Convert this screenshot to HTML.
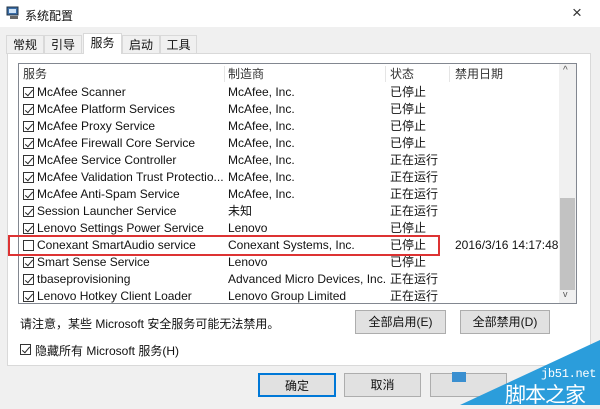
<!DOCTYPE html>
<html><head><meta charset="utf-8"><style>
*{margin:0;padding:0;box-sizing:border-box}
body{width:600px;height:405px;overflow:hidden;background:#f0f0f0;font-family:"Liberation Sans","Noto Sans CJK SC",sans-serif;font-size:12px;color:#111;position:relative}
.abs{position:absolute}
.title{left:0;top:0;width:600px;height:27px;background:#fff}
.tab{top:35px;height:19px;line-height:18px;text-align:center;font-size:12px;border:1px solid #d9d9d9;border-bottom:none;background:#f0f0f0}
.panel{left:7px;top:53px;width:584px;height:313px;background:#fff;border:1px solid #d9d9d9}
.list{left:18px;top:63px;width:559px;height:241px;border:1px solid #828790;background:#fff}
.row{position:absolute;left:0;height:17px;line-height:17px;width:540px;white-space:nowrap}
.row span{position:absolute}
.cb{position:absolute;left:4px;top:3px;width:11px;height:11px;border:1px solid #333;background:#fff}
.cb.on::after{content:"";position:absolute;left:3px;top:0px;width:3px;height:7px;border:solid #222;border-width:0 1.3px 1.3px 0;transform:rotate(40deg)}
.btn{height:24px;line-height:22px;text-align:center;background:#e1e1e1;border:1px solid #adadad;font-size:12px}
</style></head><body>
<div class="abs title"></div>
<svg class="abs" style="left:6px;top:6px" width="14" height="14" viewBox="0 0 14 14"><rect x="1" y="1" width="11" height="8" fill="#3b6ea8" stroke="#234"/><rect x="3" y="3" width="7" height="4" fill="#cfe3f7"/><rect x="4" y="10" width="8" height="3" fill="#666"/></svg>
<div class="abs" style="left:25px;top:7px;font-size:12px">系统配置</div>
<div class="abs" style="left:572px;top:3px;font-size:17px;color:#333">×</div>
<div class="abs tab" style="left:6px;width:38px">常规</div>
<div class="abs tab" style="left:44px;width:38px">引导</div>
<div class="abs tab" style="left:160px;width:37px">工具</div>
<div class="abs tab" style="left:122px;width:38px">启动</div>
<div class="abs panel"></div>
<div class="abs tab" style="left:83px;top:33px;width:39px;height:21px;background:#fff;z-index:2">服务</div>
<div class="abs list">
 <div class="row" style="top:2px;color:#333"><span style="left:4px">服务</span><span style="left:209px">制造商</span><span style="left:371px">状态</span><span style="left:436px">禁用日期</span></div>
 <div style="position:absolute;left:205px;top:2px;width:1px;height:16px;background:#e5e5e5"></div>
 <div style="position:absolute;left:366px;top:2px;width:1px;height:16px;background:#e5e5e5"></div>
 <div style="position:absolute;left:430px;top:2px;width:1px;height:16px;background:#e5e5e5"></div>
 <div id="rows"></div>
 <div style="position:absolute;left:540px;top:0;width:17px;height:239px;background:#f0f0f0"></div>
 <div style="position:absolute;left:541px;top:134px;width:15px;height:92px;background:#c2c2c2"></div>
 <div style="position:absolute;left:544px;top:1px;font-size:10px;color:#555">^</div>
 <div style="position:absolute;left:544px;top:225px;font-size:9px;color:#555">v</div>
</div>
<div class="abs" style="left:8px;top:235px;width:432px;height:21px;border:2px solid #d33;z-index:3"></div>
<div class="abs" style="left:20px;top:315px">请注意，某些 Microsoft 安全服务可能无法禁用。</div>
<div class="abs btn" style="left:355px;top:310px;width:91px">全部启用(E)</div>
<div class="abs btn" style="left:460px;top:310px;width:90px">全部禁用(D)</div>
<div class="abs cb on" style="left:20px;top:344px"></div>
<div class="abs" style="left:35px;top:342px">隐藏所有 Microsoft 服务(H)</div>
<div class="abs btn" style="left:258px;top:373px;width:78px;border:2px solid #0078d7">确定</div>
<div class="abs btn" style="left:344px;top:373px;width:77px">取消</div>
<div class="abs btn" style="left:430px;top:373px;width:77px"></div>
<svg class="abs" style="left:0;top:0" width="600" height="405"><polygon points="600,340 600,405 460,405" fill="#2b9ddb"/><rect x="452" y="372" width="14" height="10" fill="#3a8fd0"/></svg>
<div class="abs" style="left:541px;top:367px;color:#fff;font-size:12px;font-family:'Liberation Mono',monospace;letter-spacing:-0.3px">jb51.net</div>
<div class="abs" style="left:505px;top:383px;color:#fff;font-size:21px;font-family:'Noto Sans CJK SC',sans-serif;line-height:22px;letter-spacing:-1px">脚本之家</div>
<script>
var d=[["McAfee Scanner","McAfee, Inc.","已停止",1],["McAfee Platform Services","McAfee, Inc.","已停止",1],["McAfee Proxy Service","McAfee, Inc.","已停止",1],["McAfee Firewall Core Service","McAfee, Inc.","已停止",1],["McAfee Service Controller","McAfee, Inc.","正在运行",1],["McAfee Validation Trust Protectio...","McAfee, Inc.","正在运行",1],["McAfee Anti-Spam Service","McAfee, Inc.","正在运行",1],["Session Launcher Service","未知","正在运行",1],["Lenovo Settings Power Service","Lenovo","已停止",1],["Conexant SmartAudio service","Conexant Systems, Inc.","已停止",0,"2016/3/16 14:17:48"],["Smart Sense Service","Lenovo","已停止",1],["tbaseprovisioning","Advanced Micro Devices, Inc.","正在运行",1],["Lenovo Hotkey Client Loader","Lenovo Group Limited","正在运行",1]];
var h="";d.forEach(function(r,i){h+='<div class="row" style="top:'+(20+i*17)+'px"><div class="cb'+(r[3]?' on':'')+'"></div><span style="left:18px">'+r[0]+'</span><span style="left:209px">'+r[1]+'</span><span style="left:371px">'+r[2]+'</span>'+(r[4]?'<span style="left:436px">'+r[4]+'</span>':'')+'</div>'});
document.getElementById("rows").innerHTML=h;
</script>
</body></html>
